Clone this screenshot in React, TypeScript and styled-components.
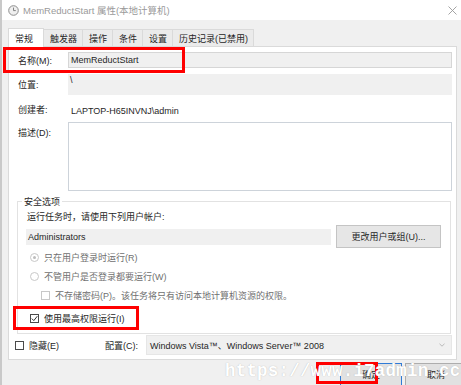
import styled, { createGlobalStyle } from "styled-components";

const FONT = `"Liberation Sans", "Noto Sans CJK SC", sans-serif`;

const GlobalStyle = createGlobalStyle`
  html, body {
    margin: 0;
    padding: 0;
    background: #f0f0f0;
  }
  body {
    font-family: ${FONT};
    font-size: 9px;
    color: #262626;
  }
`;

const TABS = ["常规", "触发器", "操作", "条件", "设置", "历史记录(已禁用)"];

const App = () => {
  return (
    <>
      <GlobalStyle />
      <Window>
        <TitleBar>
          <TitleLeft>
            <svg width="11" height="11" viewBox="0 0 11 11">
              <circle cx="5.5" cy="5.5" r="4.8" fill="#efefef" stroke="#8d8d8d" strokeWidth="1" />
              <path d="M5.5 2.6 V5.6 H7.8" fill="none" stroke="#777" strokeWidth="0.9" />
            </svg>
            <TitleText>MemReductStart 属性(本地计算机)</TitleText>
          </TitleLeft>
          <svg width="9" height="9" viewBox="0 0 9 9">
            <path d="M0.5 0.5 L8.5 8.5 M8.5 0.5 L0.5 8.5" stroke="#9a9a9a" strokeWidth="0.9" />
          </svg>
        </TitleBar>

        <Body>
          <TabStrip>
            {TABS.map((t, i) => (
              <Tab key={t} $active={i === 0}>
                {t}
              </Tab>
            ))}
          </TabStrip>

          <Panel>
            <FieldRow>
              <Label>名称(M):</Label>
              <TextInput>MemReductStart</TextInput>
            </FieldRow>
            <FieldRow $gap={6}>
              <Label $top>位置:</Label>
              <ReadBox>\</ReadBox>
            </FieldRow>
            <FieldRow $gap={5}>
              <Label>创建者:</Label>
              <Value>LAPTOP-H65INVNJ\admin</Value>
            </FieldRow>
            <FieldRow $gap={4}>
              <Label $top>描述(D):</Label>
              <TextArea />
            </FieldRow>

            <Group>
              <Legend>安全选项</Legend>
              <Hint>运行任务时，请使用下列用户帐户:</Hint>
              <AccountRow>
                <AccountField>Administrators</AccountField>
                <Button>更改用户或组(U)...</Button>
              </AccountRow>
              <Option>
                <Radio $checked />
                <span>只在用户登录时运行(R)</span>
              </Option>
              <Option>
                <Radio />
                <span>不管用户是否登录都要运行(W)</span>
              </Option>
              <Option $indent>
                <Check $disabled />
                <span>不存储密码(P)。该任务将只有访问本地计算机资源的权限。</span>
              </Option>
              <Option $strong $gap={4}>
                <Check $checked>
                  <svg width="7" height="7" viewBox="0 0 7 7">
                    <path d="M0.8 3.6 L2.8 5.6 L6.3 1.2" fill="none" stroke="#333" strokeWidth="1" />
                  </svg>
                </Check>
                <span>使用最高权限运行(I)</span>
              </Option>
            </Group>

            <BottomRow>
              <Option $strong>
                <Check $checked />
                <span>隐藏(E)</span>
              </Option>
              <ConfigLabel>配置(C):</ConfigLabel>
              <Select>
                <span>Windows Vista™、Windows Server™ 2008</span>
                <svg width="6" height="4" viewBox="0 0 6 4">
                  <path d="M0.5 0.8 L3 3.2 L5.5 0.8" fill="none" stroke="#aaa" strokeWidth="0.8" />
                </svg>
              </Select>
            </BottomRow>
          </Panel>

          <Footer>
            <DialogButton $default>确定</DialogButton>
            <DialogButton>取消</DialogButton>
          </Footer>
        </Body>

        <Marker $x={3} $y={47} $w={182} $h={26} />
        <Marker $x={13} $y={306} $w={126} $h={24} />
        <Marker $x={316} $y={362} $w={62} $h={22} />
        <Watermark>https://www.i7admin.cc</Watermark>
      </Window>
    </>
  );
};

const Window = styled.div`
  position: relative;
  width: 461px;
  height: 385px;
  overflow: hidden;
  background: #f0f0f0;
  border-left: 2px solid #c9c9c9;
  box-sizing: border-box;
`;

const TitleBar = styled.div`
  height: 20px;
  background: #ffffff;
  display: flex;
  align-items: center;
  justify-content: space-between;
  padding: 0 4px 0 6px;
`;

const TitleLeft = styled.div`
  display: flex;
  align-items: center;
  gap: 4px;
`;

const TitleText = styled.span`
  font-size: 9.5px;
  color: #9a9a9a;
`;

const Body = styled.div`
  padding: 8px 4px 0 6px;
`;

const TabStrip = styled.div`
  display: flex;
  align-items: flex-end;
  height: 18px;
`;

const Tab = styled.div<{ $active?: boolean }>`
  height: ${(p) => (p.$active ? 19 : 17)}px;
  padding: 0 ${(p) => (p.$active ? 10 : 5)}px 0 6px;
  display: flex;
  align-items: center;
  box-sizing: border-box;
  background: ${(p) => (p.$active ? "#ffffff" : "#ebebeb")};
  border: 1px solid #dadada;
  border-bottom: none;
  margin-right: -1px;
  margin-bottom: ${(p) => (p.$active ? -1 : 0)}px;
  position: relative;
  z-index: ${(p) => (p.$active ? 1 : 0)};
`;

const Panel = styled.div`
  background: #ffffff;
  border: 1px solid #dadada;
  height: 314px;
  box-sizing: border-box;
  padding: 5px 4px 0 9px;
  display: flex;
  flex-direction: column;
`;

const FieldRow = styled.div<{ $gap?: number }>`
  display: grid;
  grid-template-columns: 50px 1fr;
  align-items: center;
  margin-top: ${(p) => p.$gap ?? 0}px;
`;

const Label = styled.div<{ $top?: boolean }>`
  align-self: ${(p) => (p.$top ? "start" : "center")};
  padding-top: ${(p) => (p.$top ? 4 : 0)}px;
`;

const TextInput = styled.div`
  height: 16px;
  box-sizing: border-box;
  background: #f0f0f0;
  border: 1px solid #d6d6d6;
  padding: 0 2px;
  display: flex;
  align-items: center;
`;

const ReadBox = styled.div`
  height: 21px;
  background: #f0f0f0;
  padding: 1px 2px;
  box-sizing: border-box;
`;

const Value = styled.div`
  height: 14px;
  line-height: 14px;
  padding-left: 3px;
  margin-top: 4px;
`;

const TextArea = styled.div`
  height: 69px;
  border: 1px solid #cdd3da;
  box-sizing: border-box;
`;

const Group = styled.div`
  position: relative;
  margin: 10px 1px 0 -1px;
  border: 1px solid #e2e2e2;
  padding: 9px 8px 5px 8px;
  display: flex;
  flex-direction: column;
`;

const Legend = styled.span`
  position: absolute;
  top: -7px;
  left: 4px;
  padding: 0 2px;
  background: #ffffff;
`;

const Hint = styled.div`
  padding-left: 1px;
  line-height: 13px;
`;

const AccountRow = styled.div`
  display: flex;
  align-items: center;
  gap: 5px;
  margin-top: 1px;
`;

const AccountField = styled.div`
  width: 305px;
  height: 16px;
  background: #f0f0f0;
  padding-left: 2px;
  box-sizing: border-box;
  display: flex;
  align-items: center;
`;

const Button = styled.div`
  width: 105px;
  height: 23px;
  box-sizing: border-box;
  border: 1px solid #c4c4c4;
  background: #e6e6e6;
  display: flex;
  align-items: center;
  justify-content: center;
`;

const Option = styled.div<{ $indent?: boolean; $strong?: boolean; $gap?: number }>`
  display: flex;
  align-items: center;
  gap: 5px;
  height: 19px;
  margin-top: ${(p) => p.$gap ?? 0}px;
  padding-left: ${(p) => (p.$indent ? 15 : 4)}px;
  color: ${(p) => (p.$strong ? "#262626" : "#6f6f6f")};
`;

const Radio = styled.span<{ $checked?: boolean }>`
  width: 9px;
  height: 9px;
  box-sizing: border-box;
  border-radius: 50%;
  border: 1px solid #c8c8c8;
  display: flex;
  align-items: center;
  justify-content: center;
  &::after {
    content: "";
    width: 3px;
    height: 3px;
    border-radius: 50%;
    background: ${(p) => (p.$checked ? "#bdbdbd" : "transparent")};
  }
`;

const Check = styled.span<{ $checked?: boolean; $disabled?: boolean }>`
  width: 9px;
  height: 9px;
  box-sizing: border-box;
  border: 1px solid ${(p) => (p.$disabled ? "#c8c8c8" : "#4a4a4a")};
  background: #ffffff;
  display: flex;
  align-items: center;
  justify-content: center;
`;

const BottomRow = styled.div`
  display: flex;
  align-items: center;
  margin: 1px 0 0 -6px;
  & > ${Option} {
    width: 90px;
    padding-left: 3px;
  }
`;

const ConfigLabel = styled.span`
  width: 41px;
`;

const Select = styled.div`
  flex: 1;
  height: 20px;
  background: #f0f0f0;
  border: 1px solid #e6e6e6;
  box-sizing: border-box;
  display: flex;
  align-items: center;
  justify-content: space-between;
  padding: 0 6px 0 3px;
`;

const Footer = styled.div`
  display: flex;
  justify-content: flex-end;
  gap: 3px;
  padding: 3px 0 0 0;
  margin-right: -10px;
`;

const DialogButton = styled.div<{ $default?: boolean }>`
  width: 62px;
  height: 23px;
  box-sizing: border-box;
  background: #e1e1e1;
  border: 1px solid ${(p) => (p.$default ? "#2f7bd6" : "#adadad")};
  display: flex;
  align-items: center;
  justify-content: center;
`;

const Marker = styled.div<{ $x: number; $y: number; $w: number; $h: number }>`
  position: absolute;
  left: ${(p) => p.$x - 2}px;
  top: ${(p) => p.$y}px;
  width: ${(p) => p.$w}px;
  height: ${(p) => p.$h}px;
  border: 3px solid #ff0000;
  box-sizing: border-box;
  pointer-events: none;
`;

const Watermark = styled.div`
  position: absolute;
  left: 223px;
  top: 361px;
  font-family: "Liberation Mono", "DejaVu Sans Mono", monospace;
  font-weight: bold;
  font-size: 17.5px;
  color: #ffffff;
  text-shadow: 0 0 1px rgba(120, 120, 120, 0.5);
  letter-spacing: 0.2px;
  pointer-events: none;
`;

export default App;
